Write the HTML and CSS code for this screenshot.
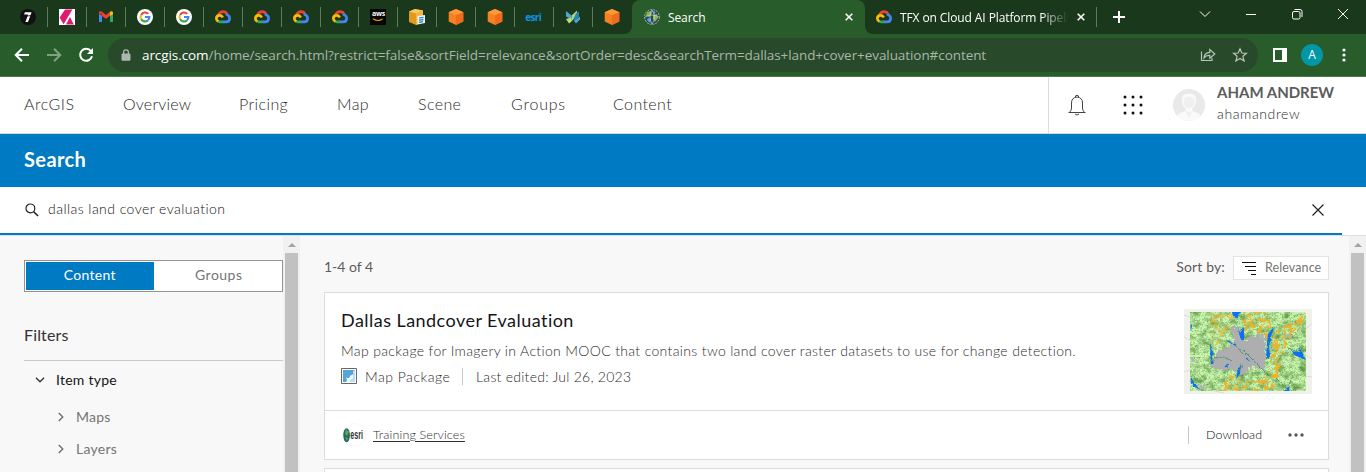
FILE: index.html
```html
<!DOCTYPE html>
<html lang="en">
<head>
<meta charset="utf-8">
<title>Search</title>
<link rel="stylesheet" href="styles.css">
</head>
<body>
<svg class="defs" width="0" height="0">
  <symbol id="google" viewBox="0 0 16 16"><circle cx="8" cy="8" r="8" fill="#fff"/><g fill="none" stroke-width="2.1"><path d="M4.1 5.9A4.4 4.4 0 0 1 11.2 4.9" stroke="#ea4335"/><path d="M4.1 10.1A4.4 4.4 0 0 1 4.1 5.9" stroke="#fbbc05"/><path d="M11 11.2A4.4 4.4 0 0 1 4.1 10.1" stroke="#34a853"/><path d="M8 8H12.4A4.4 4.4 0 0 1 11 11.2" stroke="#4285f4"/></g></symbol>
  <symbol id="cloud" viewBox="0 0 16 16"><g fill="none" stroke-width="2.7"><path d="M3.4 6.2C4.3 3.6 6 2.6 8 2.6C10 2.6 11.7 3.9 12.2 5.9" stroke="#ea4335"/><path d="M11 5.3C13.8 6.2 14.7 8 14.6 9.6C14.5 11.5 13 12.9 11.2 12.9H8" stroke="#4285f4"/><path d="M8.2 12.9H4.6L3 12.1" stroke="#34a853"/><path d="M3.4 12.4C.6 11 .8 7.5 3.4 6.6C5.3 6 7 6.9 7.8 8.5" stroke="#fbbc05"/></g></symbol>
  <symbol id="cube" viewBox="0 0 16 16"><path d="M8 0L15.3 3.2V12.5L8 16L.7 12.5V3.2Z" fill="#f58220"/><path d="M8 0L15.3 3.2L8 6.2L.7 3.2Z" fill="#ff9838"/><path d="M8 6.2L15.3 3.2V12.5L8 16Z" fill="#f26a1b"/></symbol>
</svg>

<div class="tabstrip">
  <div class="pinned">
    <span class="pin"><svg viewBox="0 0 16 16"><circle cx="8" cy="8" r="8" fill="#111"/><path d="M4.8 3.2H11.6L8 13H5.4L8.2 5.6H4.2Z" fill="#fff"/><path d="M4 7.5L11 6.5" stroke="#111" stroke-width=".8"/></svg></span>
    <span class="pin"><svg viewBox="0 0 16 16"><path d="M0 0H16V16H0Z" fill="#fff"/><path d="M6 .5H13.4L4.6 15.2L.6 8.4Z" fill="#e0196f"/><path d="M11 8L14.8 15.4H7Z" fill="#e0196f"/></svg></span>
    <span class="pin"><svg viewBox="0 0 16 16"><path d="M1 4V13H4V7Z" fill="#4285f4"/><path d="M15 4V13H12V7Z" fill="#34a853"/><path d="M1 3.6C1 2.2 2.8 1.8 4 2.8L8 6L12 2.8V6.7L8 9.8L1 5Z" fill="#ea4335"/><path d="M12 2.8C13.3 1.8 15 2.3 15 3.8V5L12 7.2Z" fill="#fbbc05"/><path d="M1 4.5L4 6.8V4Z" fill="#c5221f"/></svg></span>
    <span class="pin"><svg><use href="#google"/></svg></span>
    <span class="pin"><svg><use href="#google"/></svg></span>
    <span class="pin"><svg><use href="#cloud"/></svg></span>
    <span class="pin"><svg><use href="#cloud"/></svg></span>
    <span class="pin"><svg><use href="#cloud"/></svg></span>
    <span class="pin"><svg><use href="#cloud"/></svg></span>
    <span class="pin"><span class="aws">aws<svg viewBox="0 0 12 4"><path d="M1 .8Q6 4.2 10.5 1" fill="none" stroke="#f90" stroke-width="1.1"/></svg></span></span>
    <span class="pin"><svg viewBox="0 0 16 16"><path d="M0 2.5L6 0L14 1.5V13L7 16L0 13Z" fill="#e29a1c"/><path d="M0 2.5L6 0L14 1.5L7 4.5Z" fill="#f8c95b"/><path d="M7 4.5L14 1.5V13L7 16Z" fill="#f3b53a"/><path d="M8.5 7L16 6V14L8.5 15.5Z" fill="#e9f3fb"/><path d="M10 9L14.5 8.4M10 11.2L14.5 10.6M10 13.4L14 12.7" stroke="#2476b8" stroke-width="1.2"/></svg></span>
    <span class="pin"><svg><use href="#cube"/></svg></span>
    <span class="pin"><svg><use href="#cube"/></svg></span>
    <span class="pin"><span class="esri-fav">esri</span></span>
    <span class="pin"><svg viewBox="0 0 16 16"><path d="M1 2L6.5 6.5V11L4 9L1 7.5Z" fill="#4ba7ce"/><path d="M6.5 6.5L12 1.5V6L7 12Z" fill="#a9d486"/><path d="M11 4.5L14 2.5V8L9 12.5L8.5 10Z" fill="#2584a9"/><path d="M1 10L6.5 8.5L7 12L4 14.5Z" fill="#b9dc83"/><path d="M9 12L15 7.5V10.5L11 14.5Z" fill="#4ba7ce"/></svg></span>
    <span class="pin"><svg><use href="#cube"/></svg></span>
  </div>
  <div class="tab active">
    <svg class="fav" viewBox="0 0 16 16"><circle cx="8" cy="8" r="7.4" fill="#24485a" stroke="#b9c2b9" stroke-width=".9" stroke-dasharray="2 1"/><path d="M3 3L7 2L8 5L5 8L2 7ZM9 6L13 5L14 9L11 13L9 10Z" fill="#8db542"/><path d="M8 2L12 3L10 5ZM4 9L7 10L6 14L3 11Z" fill="#5aa3dc"/><path d="M1 8Q8 4 15 8M8 1Q4 8 8 15M8 1Q13 8 8 15" fill="none" stroke="#d3dfe0" stroke-width=".6"/></svg>
    <span class="tab-title">Search</span>
    <svg class="x" viewBox="0 0 8 8"><path d="M.7.7L7.3 7.3M7.3.7L.7 7.3"/></svg>
  </div>
  <div class="tab second">
    <svg class="fav"><use href="#cloud"/></svg>
    <span class="tab-title fade">TFX on Cloud AI Platform Pipeli</span>
    <svg class="x" viewBox="0 0 8 8"><path d="M.7.7L7.3 7.3M7.3.7L.7 7.3"/></svg>
  </div>
  <svg class="plus" viewBox="0 0 12 12"><path d="M6 0V12M0 6H12"/></svg>
  <div class="window-buttons">
    <svg viewBox="0 0 12 12"><path d="M1 3.5L6 8.5L11 3.5"/></svg>
    <svg viewBox="0 0 12 12"><path d="M1 6.5H11"/></svg>
    <svg viewBox="0 0 12 12"><rect x="1.5" y="3.5" width="7.5" height="7.5" rx="1.5"/><path d="M3.5 1.5H9Q11 1.5 11 3.5V9"/></svg>
    <svg viewBox="0 0 12 12"><path d="M1 1L11 11M11 1L1 11"/></svg>
  </div>
</div>

<div class="toolbar">
  <div class="nav-icons">
    <svg viewBox="0 0 16 16"><path d="M15 8H2M8 1.7L1.7 8L8 14.3"/></svg>
    <svg class="dim" viewBox="0 0 16 16"><path d="M1 8H14M8 1.7L14.3 8L8 14.3"/></svg>
    <svg viewBox="0 0 16 16"><path d="M13 4.2A6 6 0 1 0 14 9.3"/><path d="M15 1V7H9Z" fill="#fff" stroke="none"/></svg>
  </div>
  <div class="omnibox">
    <svg class="lock" viewBox="0 0 10 12"><path d="M1 5H9V11.2H1Z" fill="#abb8ad" stroke="#abb8ad"/><path d="M2.6 5V3.2A2.4 2.4 0 0 1 7.4 3.2V5" fill="none" stroke="#abb8ad" stroke-width="1.3"/></svg>
    <span class="url"><b>arcgis.com</b>/home/search.html?restrict=false&amp;sortField=relevance&amp;sortOrder=desc&amp;searchTerm=dallas+land+cover+evaluation#content</span>
    <svg class="share" viewBox="0 0 16 16"><path d="M1.5 4.5V13.5H12V11M4 11C4.2 7.5 6.3 5.6 9.8 5.4V2.5L14.8 7L9.8 11.3V8.4C7.2 8.2 5.4 9 4 11Z"/></svg>
    <svg class="star" viewBox="0 0 16 16"><path d="M8 1.7L9.8 6L14.5 6.3L10.9 9.3L12.1 14L8 11.4L3.9 14L5.1 9.3L1.5 6.3L6.2 6Z"/></svg>
  </div>
  <svg class="panel" viewBox="0 0 14 14"><path d="M1 1H13V13H1Z" fill="none" stroke="#fff" stroke-width="2"/><path d="M9 0H14V14H9Z" fill="#fff"/></svg>
  <span class="profile">A</span>
  <svg class="kebab" viewBox="0 0 4 14"><circle cx="2" cy="2" r="1.6"/><circle cx="2" cy="7" r="1.6"/><circle cx="2" cy="12" r="1.6"/></svg>
</div>

<header class="site-header">
  <nav>
    <a class="n1">ArcGIS</a><a class="n2">Overview</a><a class="n3">Pricing</a><a class="n4">Map</a><a class="n5">Scene</a><a class="n6">Groups</a><a class="n7">Content</a>
  </nav>
  <div class="account">
    <svg class="bell" viewBox="0 0 18 22"><path d="M.5 18.5H17.5M1.5 18.5Q3.5 16.5 3.5 14V9Q3.5 3.5 9 3Q14.5 3.5 14.5 9V14Q14.5 16.5 16.5 18.5M7.5 3V1.9Q9 .6 10.5 1.9V3M7 20Q9 22 11 20" fill="none" stroke="#444"/></svg>
    <svg class="apps" viewBox="0 0 20 20"><g fill="#111"><circle cx="2" cy="2" r="1.5"/><circle cx="10" cy="2" r="1.5"/><circle cx="18" cy="2" r="1.5"/><circle cx="2" cy="10" r="1.5"/><circle cx="10" cy="10" r="1.5"/><circle cx="18" cy="10" r="1.5"/><circle cx="2" cy="18" r="1.5"/><circle cx="10" cy="18" r="1.5"/><circle cx="18" cy="18" r="1.5"/></g></svg>
    <svg class="avatar" viewBox="0 0 32 32"><circle cx="16" cy="16" r="16" fill="#e9e9e9"/><path d="M9 11Q9 4 16 4.5Q23 4 23 11Q23 17 19.5 19V22L26 24.5Q28 26 27 27.5Q22 32 16 32Q10 32 5 27.5Q4 26 6 24.5L12.5 22V19Q9 17 9 11Z" fill="#fafafa"/><path d="M10.5 12Q11 8 16 7.5Q21 8 21.5 12Q21 18 16 19.5Q11 18 10.5 12ZM12.5 22L16 29L19.5 22Q16 24 12.5 22Z" fill="#efefef"/></svg>
    <div class="user"><div class="fullname">AHAM ANDREW</div><div class="username">ahamandrew</div></div>
  </div>
</header>

<div class="title-bar"><h1>Search</h1></div>
<div class="search-row">
  <div class="search-field">
    <svg class="lens" viewBox="0 0 14 14"><circle cx="5.4" cy="5.4" r="4.4" fill="none" stroke="#222" stroke-width="1.2"/><path d="M8.7 8.7L13 13" stroke="#222" stroke-width="1.6"/></svg>
    <span class="term">dallas land cover evaluation</span>
    <svg class="clear" viewBox="0 0 12 12"><path d="M.5.5L11.5 11.5M11.5.5L.5 11.5" stroke="#222" stroke-width="1.2"/></svg>
  </div>
</div>

<div class="content">
  <aside>
    <div class="switch"><span class="on"><i class="t-content">Content</i></span><span><i class="t-groups">Groups</i></span></div>
    <h2>Filters</h2>
    <div class="tree top"><svg viewBox="0 0 10 6"><path d="M1 .8L5 4.8L9 .8"/></svg><span class="t-item">Item type</span></div>
    <div class="tree maps"><svg viewBox="0 0 6 10"><path d="M.8 1L4.8 5L.8 9"/></svg><span>Maps</span></div>
    <div class="tree layers"><svg viewBox="0 0 6 10"><path d="M.8 1L4.8 5L.8 9"/></svg><span>Layers</span></div>
  </aside>
  <div class="scrollbar"><svg viewBox="0 0 8 4"><path d="M4 0L8 4H0Z"/></svg><div class="thumb"></div></div>
  <main>
    <div class="list-head">
      <span class="count">1-4 of 4</span>
      <span class="sortby">Sort by:</span>
      <span class="sort"><svg viewBox="0 0 14 13"><path d="M0 .5H14M3 4.5H14M6 8.5H14M9 12.5H14" stroke="#111"/></svg><span>Relevance</span></span>
    </div>
    <article>
      <div class="card-body">
        <div class="info">
          <h3>Dallas Landcover Evaluation</h3>
          <p>Map package for Imagery in Action MOOC that contains two land cover raster datasets to use for change detection.</p>
          <div class="meta">
            <svg viewBox="0 0 16 16"><path d="M.5.5H15.5V15.5H.5Z" fill="#fff" stroke="#666"/><path d="M2 2H14V14H2Z" fill="#56a5d8"/><path d="M14 2V14H9L11 11L9 9L12 6V3Z" fill="#b9def4"/><path d="M5 9L6 10H8L10 7H12V10L10 12L9 14H5L6 12Z" fill="#eef9ff"/></svg>
            <span class="kind">Map Package</span><span class="edited">Last edited: Jul 26, 2023</span>
          </div>
        </div>
        <svg class="map" viewBox="0 0 128 85">
          <defs>
            <filter id="veg" x="0" y="0" width="100%" height="100%" color-interpolation-filters="sRGB"><feTurbulence type="fractalNoise" baseFrequency=".13 .16" numOctaves="5" seed="8"/><feColorMatrix values="0 0 0 0 .4  0 0 0 0 .62  0 0 0 0 .3  2.6 0 0 0 -1.1"/><feComposite in2="SourceGraphic" operator="in"/></filter>
            <filter id="speck" x="0" y="0" width="100%" height="100%" color-interpolation-filters="sRGB"><feTurbulence type="fractalNoise" baseFrequency=".6" numOctaves="2" seed="14"/><feColorMatrix values="0 0 0 0 .36  0 0 0 0 .58  0 0 0 0 .27  0 0 2 0 -.95"/><feComposite in2="SourceGraphic" operator="in"/></filter>
            <filter id="crop" x="0" y="0" width="100%" height="100%" color-interpolation-filters="sRGB"><feTurbulence type="fractalNoise" baseFrequency=".2" numOctaves="5" seed="3"/><feColorMatrix values="0 0 0 0 .94  0 0 0 0 .69  0 0 0 0 .16  0 7 0 0 -3.4"/><feComposite in2="SourceGraphic" operator="in"/></filter>
            <filter id="rough" x="-10%" y="-10%" width="120%" height="120%"><feTurbulence type="fractalNoise" baseFrequency=".3" numOctaves="3" seed="5"/><feDisplacementMap in="SourceGraphic" scale="9" xChannelSelector="R" yChannelSelector="G"/></filter>
            <filter id="bank"><feTurbulence type="fractalNoise" baseFrequency=".3" numOctaves="2" seed="2"/><feDisplacementMap in="SourceGraphic" scale="3" xChannelSelector="R" yChannelSelector="G"/></filter>
            <clipPath id="extent"><path d="M6 3H122V82H6Z"/></clipPath>
          </defs>
          <path d="M0 0H128V85H0Z" fill="#f1f1eb"/>
          <path d="M0 28L6 31M0 63L6 61M122 67L128 68M122 20L128 14M0 6L6 8M122 46L128 50M30 82L40 84" stroke="#d5dddd" fill="none"/>
          <g clip-path="url(#extent)">
            <path d="M6 3H122V82H6Z" fill="#caf5ae"/>
            <path d="M6 3H122V82H6Z" filter="url(#veg)"/>
            <path d="M6 3H122V82H6Z" filter="url(#speck)"/>
            <path d="M25 4H50V17L40 25L34 42L28 34Z" filter="url(#crop)" opacity=".6"/>
            <path d="M58 3H84L92 38L83 33L71 22H59Z" filter="url(#crop)"/>
            <path d="M86 82V55L90 25L104 13L122 3V12L110 22L99 45L91 82Z" filter="url(#crop)"/>
            <path d="M34 82L48 64L58 72H76L86 62L91 82Z" filter="url(#crop)"/>
            <path d="M47 17L57 20L60 31L70 26L80 25L82 44L81 63L69 57L60 66L48 60L35 62L27 57L31 45L43 39L50 32Z" fill="#aeadb0" filter="url(#rough)"/>
            <path d="M102 25H108V29H102ZM6 49L15 50L11 54ZM10 75L23 76L19 80Z" fill="#b2b2b2" filter="url(#rough)"/>
            <g filter="url(#bank)"><path d="M48 3H57L53 9L49 7ZM53 14L56 24L60 18L60 31L56 29ZM26 34L29 42L28 51L30 54L27 55ZM90 18L87 29L85 37L86 48L82 50L83 34L84 25ZM106 42L116 43L114 36L122 51L112 47ZM57 55L56 65L52 70L54 60ZM6 13L8 17L7 22ZM6 67L10 73L16 81L9 77ZM99 82L106 78L104 83Z" fill="#0870f4"/><path d="M42 31L52 37L59 45M28 49L40 48L48 52M59 41L71 53L86 68M51 67L59 56M92 69L103 80L109 67M104 39L114 43" stroke="#43936f" stroke-width=".9" fill="none"/><path d="M44 32L52 36M62 49L66 52M41 58L44 55" stroke="#1676e7" stroke-width="1.4"/></g>
          </g>
        </svg>
      </div>
      <div class="card-footer">
        <svg class="org" viewBox="0 0 24 24"><circle cx="12" cy="12" r="11.6" fill="#fff" stroke="#f4f4f4" stroke-width=".6"/><ellipse cx="4.6" cy="12.3" rx="3.3" ry="7" fill="#1f6a61"/><path d="M4 6L7 9L5 13L3 11ZM3 14L6 15L5 18Z" fill="#6ba34c"/><text x="8.3" y="16" font-family="Liberation Sans" font-weight="bold" font-size="12.5" textLength="12.6" lengthAdjust="spacingAndGlyphs" fill="#303538">esri</text></svg>
        <a>Training Services</a>
        <span class="download">Download</span>
        <svg class="more" viewBox="0 0 16 4"><circle cx="2" cy="2" r="1.7"/><circle cx="8" cy="2" r="1.7"/><circle cx="14" cy="2" r="1.7"/></svg>
      </div>
    </article>
    <article class="next"></article>
  </main>
  <div class="scrollbar"><svg viewBox="0 0 8 4"><path d="M4 0L8 4H0Z"/></svg><div class="thumb"></div></div>
</div>
</body>
</html>
```
FILE: styles.css
```css
* { box-sizing: border-box; }
body { margin: 0; width: 1366px; height: 472px; overflow: hidden; display: flex; flex-direction: column; background: #fff; font-family: Lato, "Open Sans", sans-serif; color: #2c2c2c; white-space: nowrap; }
svg { display: block; flex: none; }
.defs { position: absolute; }
h1, h2, h3, p { margin: 0; font-weight: 400; }
i { font-style: normal; }

.tabstrip { height: 34px; flex: none; display: flex; background: linear-gradient(90deg, #285c2b 0 880px, #1a381c 0); font-family: "Open Sans", "Noto Sans", sans-serif; color: #fff; }
.pinned { display: flex; width: 632px; padding-left: 9px; background: #1a381c; border-bottom-right-radius: 8px; }
.pin { width: 39px; height: 20px; margin-top: 7px; padding: 2px 0 0 11px; border-right: 1px solid #5c7a5c; }
.pin:last-child { border: 0; }
.pin svg { width: 16px; height: 16px; }
.aws { display: block; width: 16px; height: 16px; background: #060606; font-size: 7px; line-height: 10px; font-weight: 700; text-align: center; letter-spacing: -.3px; }
.pin .aws svg { width: 12px; height: 4px; margin: -1px auto 0; }
.esri-fav { display: block; margin-top: -1px; margin-left: -1px; font-size: 10px; line-height: 18px; font-weight: 700; color: #0d93e6; letter-spacing: -.65px; }
.tab { display: flex; align-items: center; font-size: 12px; letter-spacing: -.1px; }
.active { width: 233px; padding-left: 12px; background: #285c2b; border-radius: 8px 8px 0 0; box-shadow: 0 -8px 0 #1a381c; }
.fav { width: 16px; height: 16px; margin-right: 8px; }
.x { width: 8px; height: 8px; margin-left: auto; stroke: #fff; stroke-width: 1.6; }
.active .x { margin-right: 12px; }
.second { width: 232px; height: 34px; padding-left: 11px; background: linear-gradient(#5c7a5c, #5c7a5c) 100% 7px / 1px 20px no-repeat #1a381c; border-bottom-left-radius: 8px; }
.second .x { margin-right: 12px; }
.fade { width: 168px; letter-spacing: -.1px; -webkit-mask-image: linear-gradient(90deg, #000 142px, transparent 168px); mask-image: linear-gradient(90deg, #000 142px, transparent 168px); }
.plus { width: 12px; height: 12px; margin: 11px 0 0 16px; stroke: #fff; stroke-width: 2; }
.window-buttons { display: flex; gap: 34px; margin: 8px 0 0 74px; }
.window-buttons svg { width: 12px; height: 12px; fill: none; stroke: #fff; }

.toolbar { height: 43px; flex: none; display: flex; align-items: center; background: #285c2b; border-bottom: 1px solid #4c7b50; font-family: "Open Sans", sans-serif; }
.nav-icons { display: flex; gap: 16px; width: 108px; padding-left: 14px; }
.nav-icons svg { width: 16px; height: 16px; fill: none; stroke: #fff; stroke-width: 2; }
.nav-icons .dim { opacity: .42; }
.omnibox { display: flex; align-items: center; width: 1150px; height: 34px; padding: 0 10px 0 13px; border-radius: 17px; background: #28492a; }
.lock { width: 10px; height: 12px; margin-right: 11px; }
.url { font-size: 13.5px; letter-spacing: -.075px; color: #a7b7a8; }
.url b { font-weight: 400; color: #fff; }
.share { width: 16px; height: 16px; margin-left: auto; }
.star { width: 16px; height: 16px; margin-left: 16px; }
.share, .star { fill: none; stroke: #b8c5b8; stroke-width: 1.2; }
.panel { width: 14px; height: 14px; margin-left: 15px; }
.profile { width: 22px; height: 22px; margin-left: 14px; border-radius: 50%; background: #0097a7; color: #fff; font-size: 12px; line-height: 22px; text-align: center; }
.kebab { width: 4px; height: 14px; margin-left: 19px; fill: #fff; }

.site-header { height: 57px; flex: none; display: flex; border-bottom: 1px solid #d9d9d9; }
nav { width: 1048px; padding: 14px 0 0 24px; display: flex; font-size: 16px; line-height: 25px; font-weight: 300; letter-spacing: .4px; color: #2c2c2c; }
nav a { flex: none; }
.n1 { width: 99px; letter-spacing: .5px; } .n2 { width: 116px; letter-spacing: .2px; } .n3 { width: 98px; } .n4 { width: 81px; } .n5 { width: 93px; } .n6 { width: 102px; letter-spacing: .8px; }
.account { display: flex; align-items: center; flex: 1; padding-left: 19px; border-left: 1px solid #dcdcdc; }
.bell { width: 18px; height: 22px; }
.apps { width: 20px; height: 20px; margin-left: 37px; }
.avatar { width: 32px; height: 32px; margin-left: 30px; }
.user { margin: -5px 0 0 12px; line-height: 22px; }
.fullname { font-size: 15px; font-weight: 700; color: #5c5c5c; }
.username { font-size: 14px; font-weight: 300; letter-spacing: .6px; color: #2c2c2c; }

.title-bar { height: 53px; flex: none; padding: 12px 24px; background: #007ac2; color: #fff; }
h1 { font-size: 20px; line-height: 27px; font-weight: 700; letter-spacing: .4px; }
.search-row { height: 49px; flex: none; border-bottom: 1px solid #dfdfdf; }
.search-field { width: 1342px; height: 48px; display: flex; align-items: center; padding: 0 18px 0 25px; border-bottom: 2px solid #007ac2; }
.lens { width: 14px; height: 14px; }
.term { margin: -3px 0 0 9px; font-size: 14px; font-weight: 300; letter-spacing: .45px; color: #111; }
.clear { width: 12px; height: 12px; margin-left: auto; }

.content { flex: 1; min-height: 0; display: flex; background: #f8f8f8; }
aside { width: 283px; padding: 24px 0 0 24px; overflow: hidden; }
.switch { display: flex; height: 32px; padding: 1px; background: #fff; border: 1px solid #949494; font-size: 14px; line-height: 26px; letter-spacing: .3px; text-align: center; color: #757575; }
.switch span { flex: 1; }
.t-groups { margin-left: 3px; letter-spacing: .5px; }
.switch .on { background: #007ac2; color: #fff; }
h2 { height: 69px; padding-top: 33px; border-bottom: 1px solid #cacaca; font-size: 16px; line-height: 20px; letter-spacing: .15px; color: #323232; }
.tree { display: flex; align-items: center; font-size: 14px; line-height: 20px; letter-spacing: .25px; color: #757575; }
.tree svg { fill: none; stroke: #6a6a6a; stroke-width: 1.3; }
.top { margin: 9px 0 0 11px; color: #151515; }
.top svg { width: 10px; height: 6px; margin-right: 11px; stroke: #333; }
.maps, .layers { margin-left: 34px; }
.maps { margin-top: 17px; }
.layers { margin-top: 12px; }
.maps svg, .layers svg { width: 6px; height: 10px; margin-right: 12px; }
.scrollbar { width: 17px; padding: 7px 2px 0; background: #f1f1f1; }
.scrollbar svg { width: 8px; height: 4px; margin: 0 auto; fill: #a3a3a3; }
.thumb { height: 240px; margin-top: 6px; background: #c1c1c1; }

main { width: 1049px; padding: 20px 20px 0 24px; overflow: hidden; }
.list-head { height: 24px; display: flex; align-items: center; font-size: 14px; font-weight: 400; color: #5c5c5c; }
.count { margin-top: -3px; }
.sortby { margin: -3px 0 0 auto; letter-spacing: .15px; }
.sort { display: flex; align-items: center; width: 96px; height: 24px; margin-left: 8px; padding-left: 8px; border: 1px solid #e4e4e4; background: #fff; font-size: 12.5px; color: #757575; }
.sort span { margin-top: -2px; letter-spacing: .1px; }
.sort svg { width: 14px; height: 13px; margin-right: 9px; }
article { height: 168px; margin-top: 12px; border: 1px solid #dcdcdc; background: #fff; }
.card-body { display: flex; justify-content: space-between; height: 118px; padding: 16px 16px 0; border-bottom: 1px solid #dcdcdc; }
h3 { font-size: 18px; line-height: 22px; letter-spacing: .46px; color: #151515; }
p { margin-top: 10px; font-size: 14px; line-height: 20px; font-weight: 300; letter-spacing: .345px; }
.meta { display: flex; align-items: center; height: 20px; margin-top: 5px; font-size: 14px; font-weight: 300; letter-spacing: .4px; }
.meta svg { width: 16px; height: 16px; }
.kind { width: 98px; margin-left: 8px; letter-spacing: .5px; border-right: 1px solid #c8c8c8; }
.edited { margin-left: 13px; letter-spacing: .26px; }
.map { width: 128px; height: 85px; }
.card-footer { display: flex; align-items: center; height: 48px; padding: 0 24px 0 17px; font-size: 12.5px; font-weight: 300; }
.org { width: 24px; height: 24px; overflow: visible; }
.card-footer a { margin: -2px 0 0 7px; letter-spacing: .15px; text-decoration: underline; text-underline-offset: 2px; }
.download { margin-left: auto; padding-left: 17px; width: 75px; border-left: 1px solid #c8c8c8; line-height: 18px; letter-spacing: .1px; color: #111; }
.more { width: 16px; height: 4px; margin-left: 25px; fill: #595959; }
.next { margin-top: 8px; }
```
